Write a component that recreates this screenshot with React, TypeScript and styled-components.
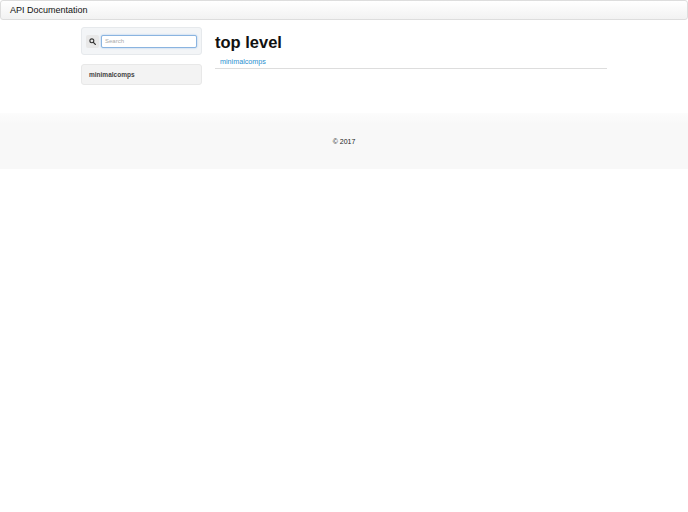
import styled, { createGlobalStyle } from "styled-components";

const Global = createGlobalStyle`
  body { margin: 0; font-family: "Liberation Sans", Arial, sans-serif; color: #333; background: #fff; }
`;

const App = () => (
  <>
    <Global />
    <Navbar>API Documentation</Navbar>
    <Container>
      <Sidebar>
        <SearchWell>
          <SearchButton>
            <svg width="7" height="7" viewBox="0 0 16 16">
              <circle cx="6.5" cy="6.5" r="4.5" fill="none" stroke="#333" strokeWidth="2.5" />
              <path d="M10 10l4.5 4.5" stroke="#333" strokeWidth="3" strokeLinecap="round" />
            </svg>
          </SearchButton>
          <SearchInput placeholder="Search" />
        </SearchWell>
        <NavBox>minimalcomps</NavBox>
      </Sidebar>
      <Content>
        <Title>top level</Title>
        <PackageList>
          <PackageLink href="#">minimalcomps</PackageLink>
        </PackageList>
      </Content>
    </Container>
    <Footer>© 2017</Footer>
  </>
);

const Navbar = styled.div`
  height: 18px;
  border: 1px solid #ddd;
  border-radius: 3px;
  background: linear-gradient(#fff, #f2f2f2);
  padding-left: 9px;
  font-size: 9px;
  line-height: 18px;
  color: #111;
`;

const Container = styled.div`
  width: 526px;
  margin: 7px auto 0;
  display: flex;
  gap: 13px;
  height: 86px;
`;

const Sidebar = styled.div`
  width: 121px;
  display: flex;
  flex-direction: column;
  gap: 9px;
`;

const SearchWell = styled.div`
  height: 28px;
  box-sizing: border-box;
  background: #f3f5f7;
  border: 1px solid #e6e9ec;
  border-radius: 3px;
  display: flex;
  align-items: center;
  padding: 0 4px;
  gap: 2px;
`;

const SearchButton = styled.div`
  width: 13px;
  height: 13px;
  background: #e8e8e8;
  border-radius: 2px;
  display: flex;
  align-items: center;
  justify-content: center;
`;

const SearchInput = styled.input`
  flex: 1;
  min-width: 0;
  height: 13px;
  box-sizing: border-box;
  border: 1px solid #8ab4e0;
  border-radius: 2px;
  box-shadow: 0 0 2px #9ec3ea;
  font-size: 6px;
  padding: 0 3px;
  font-family: inherit;
  &::placeholder { color: #aaa; }
`;

const NavBox = styled.div`
  height: 21px;
  box-sizing: border-box;
  background: #f3f3f3;
  border: 1px solid #e8e8e8;
  border-radius: 3px;
  padding-left: 7px;
  font-size: 6.5px;
  font-weight: bold;
  line-height: 19px;
  color: #444;
`;

const Content = styled.div`
  flex: 1;
`;

const Title = styled.h1`
  margin: 5px 0 2px;
  font-size: 16.5px;
  line-height: 20px;
  color: #111;
`;

const PackageList = styled.div`
  border-bottom: 1px solid #ddd;
  padding: 0 0 1px 5px;
  line-height: 10px;
`;

const PackageLink = styled.a`
  font-size: 7.2px;
  color: #2a8fd0;
  text-decoration: none;
`;

const Footer = styled.div`
  height: 56px;
  background: linear-gradient(#fcfcfc, #f8f8f8 20%);
  display: flex;
  align-items: center;
  justify-content: center;
  font-size: 7px;
  color: #222;
`;

export default App;
